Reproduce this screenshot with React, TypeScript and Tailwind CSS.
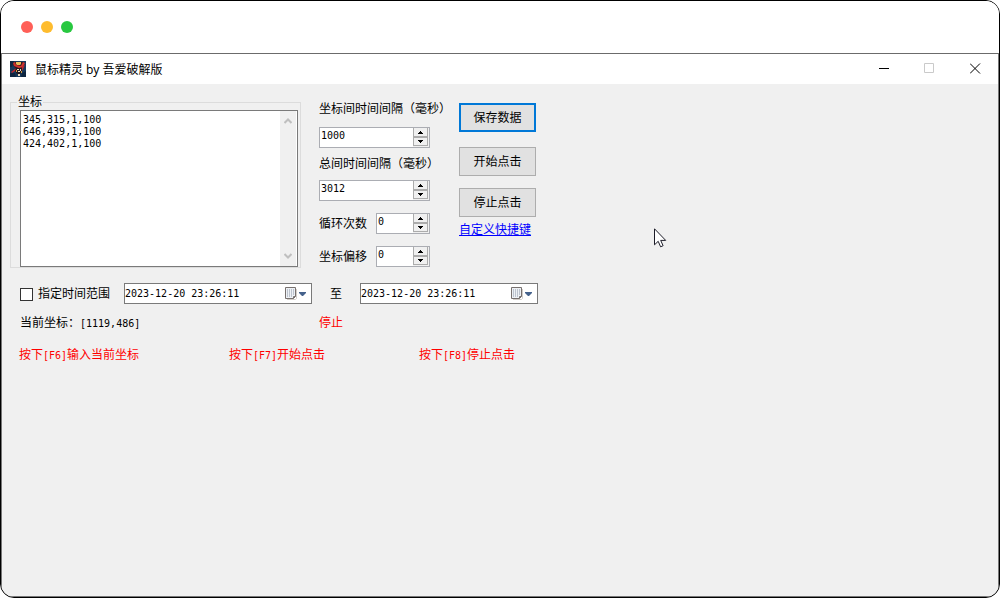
import React, { useState } from 'react';

interface SpinFieldProps {
  id: string;
  initial: number;
  className?: string;
}

const SpinField: React.FC<SpinFieldProps> = ({ id, initial, className = '' }) => {
  const [value, setValue] = useState(String(initial));

  const step = (delta: number) => {
    setValue(String(Math.max(0, (parseInt(value, 10) || 0) + delta)));
  };

  return (
    <div className={`flex h-[21px] border border-[#abadb3] bg-white ${className}`}>
      <input
        id={id}
        type="text"
        inputMode="numeric"
        value={value}
        onChange={(e) => setValue(e.target.value)}
        className="h-4 w-0 flex-1 bg-transparent px-px font-['DejaVu_Sans_Mono',monospace] text-[10px] leading-4 outline-none"
      />
      <div className="flex w-4 flex-col bg-[#f0f0f0] pr-px pb-px">
        <button type="button" aria-label="增加" onClick={() => step(1)} className="flex flex-1 items-center justify-center border border-t-0 border-[#acacac] bg-[#f0f0f0] pt-px">
          <svg className="h-[3px] w-[5px]" viewBox="0 0 5 3" shapeRendering="crispEdges"><path d="M2 0h1v1h1v1h1v1H0V2h1V1h1z" /></svg>
        </button>
        <button type="button" aria-label="减少" onClick={() => step(-1)} className="flex flex-1 items-center justify-center border border-[#acacac] bg-[#f0f0f0]">
          <svg className="h-[3px] w-[5px]" viewBox="0 0 5 3" shapeRendering="crispEdges"><path d="M0 0h5v1H4v1H3v1H2V2H1V1H0z" /></svg>
        </button>
      </div>
    </div>
  );
};

const DateField: React.FC<{ label: string; className?: string }> = ({ label, className = '' }) => {
  const [value, setValue] = useState('2023-12-20 23:26:11');

  return (
    <div className={`flex h-[21px] items-center border border-[#7a7a7a] bg-white ${className}`}>
      <input
        type="text"
        aria-label={label}
        value={value}
        onChange={(e) => setValue(e.target.value)}
        className="w-0 flex-1 bg-transparent font-['DejaVu_Sans_Mono',monospace] text-[10px] leading-4 outline-none"
      />
      <button type="button" aria-label="选择日期" className="mr-[5px] flex items-center gap-0.5">
        <svg className="h-[13px] w-3" viewBox="0 0 12 13" fill="none">
          <path d="M2 12.5h8.500l1-1V2" stroke="#d2cdc8" />
          <path d="M.5.5h10v9l-2 2h-8z" fill="#eef1f5" stroke="#77716f" />
          <path d="M2 3h7M2 5h7M2 7h7M2 9h5" stroke="#8c97a8" strokeDasharray="1 1" />
          <path d="M8.500 11.500v-2h2" stroke="#77716f" />
        </svg>
        <svg className="h-1 w-[7px]" viewBox="0 0 7 4"><path d="M0 0h7v1L4 4H3L0 1z" fill="#45628c" /></svg>
      </button>
    </div>
  );
};

const Mono: React.FC<{ children: React.ReactNode }> = ({ children }) => (
  <span className="font-['DejaVu_Sans_Mono',monospace] text-[10px]">{children}</span>
);

const TitleBar: React.FC = () => (
  <header className="flex h-[31px] items-center border-t border-[#6b6b6b] bg-white pl-2">
    <svg className="h-4 w-4" viewBox="0 0 16 16">
      <path fill="#17395c" d="M0 0h16v16H0z" />
      <path fill="#0f2540" d="M0 0h4L2 6H0zM0 12h5l1 4H0zM12 12l4-2v6h-5z" />
      <path fill="#3a1a20" d="M4 1h9l1 4-2 3H6L3 4z" />
      <path fill="#d0302c" d="M3 2l2-1 1 3 5 1 2-4 2 1-2 4-4 1-5-2z" />
      <path fill="#e6bd5a" d="M6 1h5v2l-1 1H7L6 3z" />
      <path fill="#c0252c" d="M1 11l4-3 2-1 1 2-3 1-3 2zM12 6l3-2-3 6z" />
      <path fill="#221a20" d="M6 7h6v4l-2 2H7L5 10z" />
      <path fill="#f0dcc0" d="M7 8h2v1H7zM10 8h1v2h-1zM8 10h2v1H8zM8 13h2v2H8z" />
      <path fill="#d69a3c" d="M6 9h1v2H6zM11 10h1v2h-1z" />
    </svg>
    <h1 className="ml-[9px] flex-1 pt-px font-['Noto_Sans','Noto_Sans_CJK_SC',sans-serif] text-xs leading-4">鼠标精灵 by 吾爱破解版</h1>
    <button type="button" aria-label="最小化" className="flex h-full w-[45px] items-center justify-center pb-0.5">
      <svg className="h-[11px] w-[11px]" viewBox="0 0 11 11" shapeRendering="crispEdges"><path d="M0 5h10v1H0z" /></svg>
    </button>
    <button type="button" aria-label="最大化" disabled className="flex h-full w-[45px] items-center justify-center pb-0.5">
      <svg className="h-[11px] w-[11px]" viewBox="0 0 11 11" fill="none" stroke="#cacaca"><path d="M.5.5h9v9h-9z" /></svg>
    </button>
    <button type="button" aria-label="关闭" className="flex h-full w-[46px] items-center justify-center pb-0.5">
      <svg className="h-[11px] w-[11px]" viewBox="0 0 11 11" fill="none" stroke="#000"><path d="M0 .5l10 10M10 .5l-10 10" /></svg>
    </button>
  </header>
);

const App: React.FC = () => {
  const [points, setPoints] = useState('345,315,1,100\n646,439,1,100\n424,402,1,100');
  const [limited, setLimited] = useState(false);

  return (
    <div className="relative flex min-h-screen flex-col overflow-hidden rounded-[14px] border border-black bg-[#f0f0f0] font-['Liberation_Sans','Noto_Sans_CJK_SC',sans-serif] text-xs leading-4 text-black">
      <div className="flex h-[52px] items-center gap-2 bg-white pl-5">
        <span className="h-3 w-3 rounded-full bg-[#ff5f57]" />
        <span className="h-3 w-3 rounded-full bg-[#febc2e]" />
        <span className="h-3 w-3 rounded-full bg-[#28c840]" />
      </div>

      <div className="flex flex-1 flex-col border-x border-b border-[#777]">
        <TitleBar />

        <main className="flex-1 pl-2">
          <div className="flex items-start pt-2.5">
            {/* Coordinates */}
            <fieldset className="w-[291px] border border-[#dcdcdc] pr-0.5 pl-1.5">
              <legend className="px-px">
                <label htmlFor="points">坐标</label>
              </legend>
              <div className="ml-[3px] flex h-[157px] border border-[#7a7a7a] bg-white pr-px">
                <textarea
                  id="points"
                  value={points}
                  onChange={(e) => setPoints(e.target.value)}
                  className="w-0 flex-1 resize-none overflow-hidden px-0.5 pt-[3px] font-['DejaVu_Sans_Mono',monospace] text-[10px] leading-3 outline-none"
                />
                <div className="flex w-4 flex-col items-center justify-between bg-[#f0f0f0] py-1.5">
                  <svg className="h-2 w-2" viewBox="0 0 8 8" fill="none" stroke="#bfbfbf" strokeWidth="2"><path d="M.5 6L4 2.500 7.500 6" /></svg>
                  <svg className="h-2 w-2" viewBox="0 0 8 8" fill="none" stroke="#bfbfbf" strokeWidth="2"><path d="M.5 2L4 5.500 7.500 2" /></svg>
                </div>
              </div>
            </fieldset>

            {/* Timing */}
            <div className="mt-[7px] ml-[18px] flex w-[140px] flex-col items-start">
              <label htmlFor="interval" className="whitespace-nowrap">坐标间时间间隔（毫秒）</label>
              <SpinField id="interval" initial={1000} className="mt-2.5 w-[111px]" />
              <label htmlFor="total" className="mt-2 whitespace-nowrap">总间时间间隔（毫秒）</label>
              <SpinField id="total" initial={3012} className="mt-2 w-[111px]" />
              <div className="mt-3 flex w-[111px] items-center justify-between">
                <label htmlFor="loops" className="pt-px">循环次数</label>
                <SpinField id="loops" initial={0} className="w-[54px]" />
              </div>
              <div className="mt-3 flex w-[111px] items-center justify-between">
                <label htmlFor="offset" className="pt-px">坐标偏移</label>
                <SpinField id="offset" initial={0} className="w-[54px]" />
              </div>
            </div>

            {/* Commands */}
            <div className="mt-[9px] flex w-[77px] flex-col">
              <button type="button" className="h-[29px] border-2 border-[#0078d7] bg-[#e1e1e1]">保存数据</button>
              <button type="button" className="mt-[15px] h-[29px] border border-[#adadad] bg-[#e1e1e1]">开始点击</button>
              <button type="button" className="mt-3 h-[29px] border border-[#adadad] bg-[#e1e1e1]">停止点击</button>
              <a href="#hotkeys" className="mt-[5px] text-[#0000ff] underline">自定义快捷键</a>
            </div>
          </div>

          <div className="mt-[15px] flex items-center pl-2.5">
            <label className="flex w-[104px] items-center gap-[5px] pt-px">
              <input
                type="checkbox"
                checked={limited}
                onChange={(e) => setLimited(e.target.checked)}
                className="h-[13px] w-[13px] appearance-none border border-[#333] bg-white checked:bg-[#0078d7]"
              />
              指定时间范围
            </label>
            <DateField label="开始时间" className="w-[188px]" />
            <span className="w-12 text-center">至</span>
            <DateField label="结束时间" className="w-[178px]" />
          </div>

          <div className="mt-[11px] flex pl-2.5">
            <p className="w-[299px]">当前坐标：<Mono>[1119,486]</Mono></p>
            <p className="text-[#ff0000]">停止</p>
          </div>

          <div className="mt-[15px] flex pl-[9px] text-[#ff0000]">
            <p className="w-[210px]">按下<Mono>[F6]</Mono>输入当前坐标</p>
            <p className="w-[190px]">按下<Mono>[F7]</Mono>开始点击</p>
            <p>按下<Mono>[F8]</Mono>停止点击</p>
          </div>
        </main>
      </div>

      {/* Mouse pointer */}
      <svg className="pointer-events-none absolute top-[227px] left-[653px] h-[20px] w-[13px]" viewBox="0 0 13 20">
        <path d="M.5.8v16l3.700-3.500 2.400 5.500 2.500-1.100-2.400-5.300h5z" fill="#fff" stroke="#1c1c28" />
      </svg>
    </div>
  );
};

export default App;
